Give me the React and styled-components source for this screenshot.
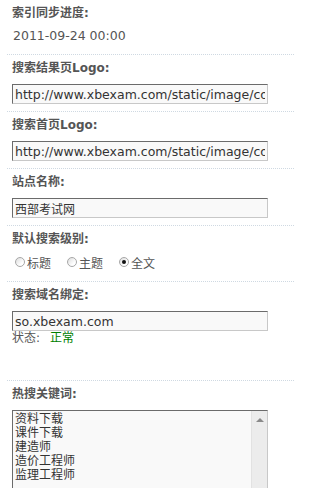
import React from "react";
import styled, { createGlobalStyle } from "styled-components";

const GlobalStyle = createGlobalStyle`
  html, body {
    margin: 0;
    padding: 0;
    background: #fff;
  }
  body {
    font-family: "DejaVu Sans", "Noto Sans CJK SC", sans-serif;
    font-size: 12px;
    color: #555;
  }
`;

const Panel = styled.div`
  padding-left: 7px;
  width: 287px;
`;

const Section = styled.div`
  border-bottom: 1px dotted #cfd9e2;
  padding: 4px 0 ${(p) => p.$bottom || 7}px 5px;

  &:last-child {
    border-bottom: none;
  }
`;

const Title = styled.div`
  height: 18px;
  line-height: 18px;
  font-weight: bold;
  color: #555;
  white-space: nowrap;
`;

const Value = styled.div`
  height: 18px;
  line-height: 18px;
  margin: 5px 0 2px 1px;
  font-size: 12.5px;
  color: #555;
`;

const TextInput = styled.input`
  display: block;
  box-sizing: border-box;
  width: 256px;
  height: 20px;
  margin-top: 7px;
  padding: 0 2px;
  border: 1px solid;
  border-color: #6b6b6b #c8c8c8 #c8c8c8 #6b6b6b;
  background: #f9f9f9;
  font-family: "DejaVu Sans", "Noto Sans CJK SC", sans-serif;
  font-size: ${(p) => (p.$cjk ? 12 : 12.5)}px;
  color: #333;
  outline: none;
`;

const RadioRow = styled.div`
  display: flex;
  align-items: center;
  gap: 16px;
  height: 18px;
  margin: 5px 0 3px 3px;
`;

const RadioLabel = styled.label`
  display: flex;
  align-items: center;
  gap: 2px;
  color: #555;
`;

const RadioMark = styled.span`
  position: relative;
  box-sizing: border-box;
  width: 10px;
  height: 10px;
  border-radius: 50%;
  border: 1px solid #a7a7a7;
  background: linear-gradient(135deg, #dcdcdc, #fff 70%);

  &::after {
    content: "";
    display: ${(p) => (p.$checked ? "block" : "none")};
    position: absolute;
    left: 2px;
    top: 2px;
    width: 4px;
    height: 4px;
    border-radius: 50%;
    background: #111;
  }
`;

const Status = styled.div`
  line-height: 14px;
  margin-bottom: 28px;
  color: #555;
`;

const StatusOk = styled.span`
  color: #008000;
  margin-left: 10px;
`;

const ListBox = styled.div`
  display: flex;
  box-sizing: border-box;
  width: 256px;
  height: 100px;
  margin-top: 7px;
  border: 1px solid;
  border-color: #6b6b6b #c8c8c8 #c8c8c8 #6b6b6b;
  background: #f9f9f9;
`;

const ListText = styled.div`
  flex: 1;
  padding: 1px 2px;
  line-height: 14px;
  color: #333;
`;

const ScrollBar = styled.div`
  position: relative;
  width: 15px;
  background: #ececec;
  border-left: 1px solid #e2e2e2;

  &::before {
    content: "";
    position: absolute;
    left: 4px;
    top: 7px;
    border-left: 4px solid transparent;
    border-right: 4px solid transparent;
    border-bottom: 4px solid #8a8a8a;
  }
`;

const radios = [
  { label: "标题", checked: false },
  { label: "主题", checked: false },
  { label: "全文", checked: true },
];

const keywords = ["资料下载", "课件下载", "建造师", "造价工程师", "监理工程师"];

export default function App() {
  return (
    <>
      <GlobalStyle />
      <Panel>
        <Section $bottom={7}>
          <Title>索引同步进度:</Title>
          <Value>2011-09-24 00:00</Value>
        </Section>
        <Section>
          <Title>搜索结果页Logo:</Title>
          <TextInput readOnly value="http://www.xbexam.com/static/image/common/logo.png" />
        </Section>
        <Section>
          <Title>搜索首页Logo:</Title>
          <TextInput readOnly value="http://www.xbexam.com/static/image/common/logo_sc.png" />
        </Section>
        <Section>
          <Title>站点名称:</Title>
          <TextInput $cjk readOnly value="西部考试网" />
        </Section>
        <Section>
          <Title>默认搜索级别:</Title>
          <RadioRow>
            {radios.map((r) => (
              <RadioLabel key={r.label}>
                <RadioMark $checked={r.checked} />
                {r.label}
              </RadioLabel>
            ))}
          </RadioRow>
        </Section>
        <Section>
          <Title>搜索域名绑定:</Title>
          <TextInput readOnly value="so.xbexam.com" />
          <Status>
            状态:<StatusOk>正常</StatusOk>
          </Status>
        </Section>
        <Section>
          <Title>热搜关键词:</Title>
          <ListBox>
            <ListText>
              {keywords.map((k) => (
                <div key={k}>{k}</div>
              ))}
            </ListText>
            <ScrollBar />
          </ListBox>
        </Section>
      </Panel>
    </>
  );
}
